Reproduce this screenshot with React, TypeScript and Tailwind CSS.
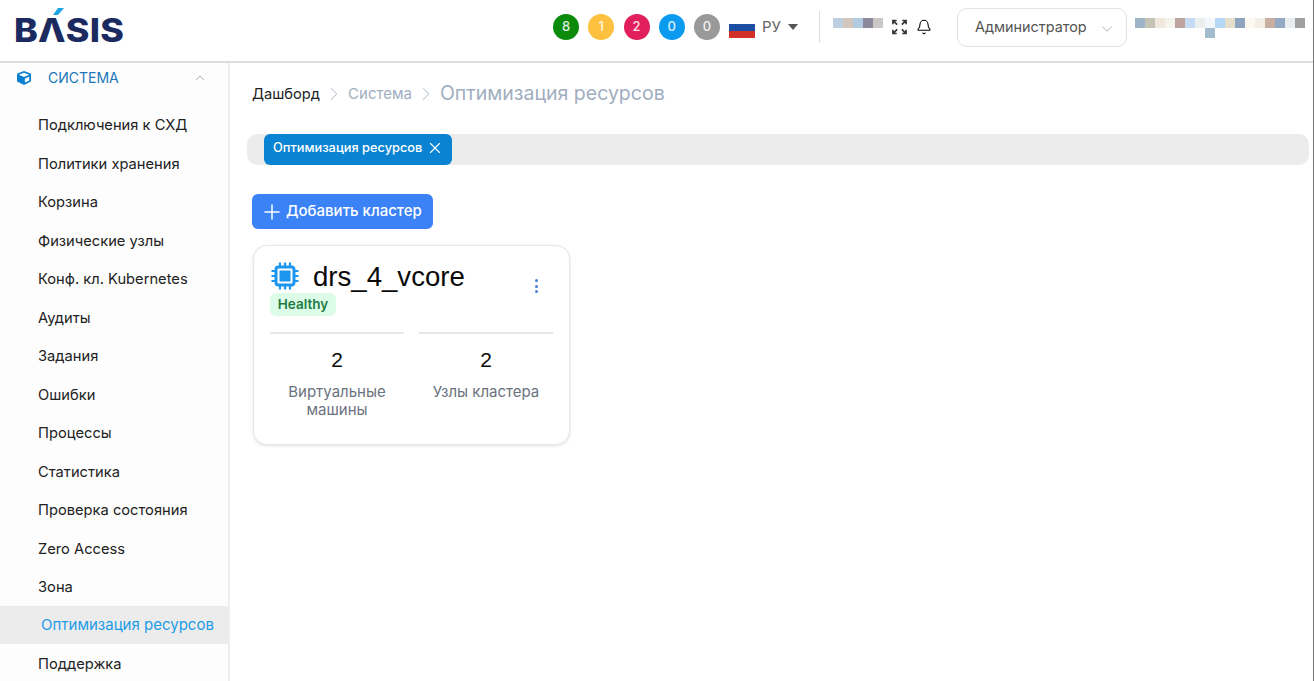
import React from "react";
import { Bell, ChevronDown, ChevronRight, ChevronUp, Plus, X } from "lucide-react";
import { FaCube } from "react-icons/fa";

const STATUS = [
  { value: 8, bg: "bg-[#0b8a0b]" },
  { value: 1, bg: "bg-[#fdc13f]" },
  { value: 2, bg: "bg-[#e01f5c]" },
  { value: 0, bg: "bg-[#0a9af0]" },
  { value: 0, bg: "bg-[#999999]" },
];

const MENU = [
  "Подключения к СХД",
  "Политики хранения",
  "Корзина",
  "Физические узлы",
  "Конф. кл. Kubernetes",
  "Аудиты",
  "Задания",
  "Ошибки",
  "Процессы",
  "Статистика",
  "Проверка состояния",
  "Zero Access",
  "Зона",
];

const MOSAIC_A = ["#bdd0e2", "#d3c6bc", "#b1cbe0", "#8c889c", "#ccc7c7"];
const MOSAIC_B = [
  "#9fb4c9", "#c5c3b4", "#f0e8dd", "#f5f3ee", "#bfa3a0", "#c5dcf4", "#e9efec", "#f3f7fb", "#b5d8f6",
  "#e6dfcb", "#8fa4bf", "#fbf9f0", "#f4efe6", "#c8ada0", "#94aac4", "#e9edf0", "#a0a0a0",
];

function Flag() {
  return (
    <div className="flex flex-col w-[26px] h-[21px]">
      <div className="flex-1 bg-white" />
      <div className="flex-1 bg-[#1a4fa3]" />
      <div className="flex-1 bg-[#d12f28]" />
    </div>
  );
}

function ChipIcon() {
  return (
    <svg width="30" height="30" viewBox="0 0 30 30" fill="none" stroke="#1a96ee" strokeWidth="3">
      <rect x="6" y="6" width="18" height="18" rx="2.5" />
      <rect x="9.5" y="9.5" width="11" height="11" fill="#1a96ee" stroke="none" />
      <path d="M10 1.5V6M15 1.5V6M20 1.5V6M10 24v4.5M15 24v4.5M20 24v4.5M1.5 10H6M1.5 15H6M1.5 20H6M24 10h4.5M24 15h4.5M24 20h4.5" strokeWidth="2.2" />
    </svg>
  );
}

function Header() {
  return (
    <header className="h-[63px] shrink-0 flex items-start bg-white border-b-2 border-[#dddddd]">
      {/* Logo */}
      <div className="relative ml-[14px] mt-[8px] w-[112px] h-[36px]">
        <span className="absolute left-0 top-[4px] origin-left scale-x-[1.12] text-[#1b2b5f] text-[32px] leading-[38px] font-extrabold tracking-[0.2px] whitespace-nowrap">
          BΛSIS
        </span>
        <svg className="absolute left-[39px] top-0" width="11" height="7" viewBox="0 0 11 7">
          <polygon points="5,0 11,0 5,7 0,7" fill="#1ba4e4" />
        </svg>
      </div>

      <div className="ml-auto h-[54px] flex items-center">
        <div className="flex items-center gap-[9.25px]">
          {STATUS.map((s, i) => (
            <span
              key={i}
              className={`w-[26px] h-[26px] rounded-full flex items-center justify-center text-[13px] font-medium text-white/85 ${s.bg}`}
            >
              {s.value}
            </span>
          ))}
        </div>
        <div className="ml-[9px] flex items-center">
          <Flag />
          <span className="ml-[7px] w-[19px] text-[15px] text-[#666666]">РУ</span>
          <span className="ml-[7px] w-0 h-0 border-x-[5px] border-x-transparent border-t-[6px] border-t-[#555555]" />
        </div>
        <div className="ml-[21px] w-px h-[32px] bg-[#dddddd]" />
        <div className="ml-[13px] flex h-[10px] mt-[-8px]">
          {MOSAIC_A.map((c, i) => (
            <div key={i} className="w-[10px] h-[10px]" style={{ background: c }} />
          ))}
        </div>
        <svg className="ml-[9px]" width="15" height="16" viewBox="0 0 16 16" fill="none" stroke="#333333" strokeWidth="1.7">
          <path d="M1 5V1h4M1 1l4.5 4.5M11 1h4v4M15 1l-4.5 4.5M1 11v4h4M1 15l4.5-4.5M15 11v4h-4M15 15l-4.5-4.5" />
        </svg>
        <Bell className="ml-[9px]" size={16} strokeWidth={1.6} color="#000000" />
        <button className="ml-[25px] w-[170px] h-[39px] flex items-center pl-[17px] pr-[10px] rounded-[10px] border border-[#e2e2e2] text-[14.4px] text-[#555555]">
          <span>Администратор</span>
          <ChevronDown className="ml-auto mt-[3px]" size={18} strokeWidth={1} color="#999999" />
        </button>
        <div className="ml-[8px] mr-[8px] relative flex w-[170px] h-[10px] mt-[-8px]">
          {MOSAIC_B.map((c, i) => (
            <div key={i} className="w-[10px] h-[10px]" style={{ background: c }} />
          ))}
          <div className="absolute left-[70px] top-[10px] w-[10px] h-[10px] bg-[#a3bccd]" />
        </div>
      </div>
    </header>
  );
}

function Sidebar() {
  return (
    <aside className="w-[230px] shrink-0 h-full bg-[#fdfdfd] border-r-2 border-[#eeeeee] overflow-hidden">
      <div className="h-[29px] flex items-center pl-[17px] pr-[20px]">
        <FaCube size={14} color="#0a7fd0" />
        <span className="ml-[17px] text-[14px] text-[#1a76b8]">СИСТЕМА</span>
        <ChevronUp className="ml-auto" size={16} strokeWidth={1} color="#888888" />
      </div>
      <nav className="mt-[13px]">
        {MENU.map((item) => (
          <div key={item} className="h-[38.5px] pt-[2px] flex items-center pl-[38px] text-[14.7px] text-[#222222] whitespace-nowrap">
            {item}
          </div>
        ))}
        <div className="h-[38.5px] pt-[1px] flex items-center pl-[41px] text-[15px] text-[#1f9be6] bg-[#ececec] whitespace-nowrap">
          Оптимизация ресурсов
        </div>
        <div className="h-[38.5px] pt-[2px] flex items-center pl-[38px] text-[14.7px] text-[#222222]">Поддержка</div>
      </nav>
    </aside>
  );
}

function Stat({ value, label }: { value: number; label: string }) {
  return (
    <div className="border-t-2 border-[#e5e7eb] text-center px-[10px]">
      <div className="mt-[13px] text-[21px] leading-[26px] text-[#0a0a0a] font-['Liberation_Sans',sans-serif]">{value}</div>
      <div className="mt-[10px] text-[15px] leading-[18px] text-[#6b7280]">{label}</div>
    </div>
  );
}

function ClusterCard() {
  return (
    <div className="w-[317px] h-[200px] ml-[6px] mt-[16px] rounded-[14px] border border-[#e4e8ee] bg-white shadow-[0_1px_3px_rgba(0,0,0,0.12)] px-[16px] pt-[14px]">
      <div className="flex items-start">
        <div className="flex-1">
          <div className="flex items-center h-[32px]">
            <ChipIcon />
            <span className="ml-[13px] mt-[1px] text-[27.6px] leading-[32px] text-[#0a0a0a] font-['Liberation_Sans',sans-serif]">drs_4_vcore</span>
          </div>
          <span className="mt-[1px] block w-[66px] h-[23px] leading-[23px] text-center rounded-[6px] bg-[#dcfce7] text-[#1d7a42] text-[13.5px] font-semibold">
            Healthy
          </span>
        </div>
        <div className="mt-[19px] mr-[15px] flex flex-col gap-[2.5px]">
          <span className="w-[3px] h-[3px] rounded-full bg-[#4a7fd6]" />
          <span className="w-[3px] h-[3px] rounded-full bg-[#4a7fd6]" />
          <span className="w-[3px] h-[3px] rounded-full bg-[#4a7fd6]" />
        </div>
      </div>
      <div className="mt-[16px] grid grid-cols-2 gap-[15px]">
        <Stat value={2} label="Виртуальные машины" />
        <Stat value={2} label="Узлы кластера" />
      </div>
    </div>
  );
}

export default function App() {
  return (
    <div className="w-[1314px] h-[681px] flex flex-col overflow-hidden bg-white border-r border-[#777777] font-['Inter',sans-serif]">
      <Header />
      <div className="flex-1 flex min-h-0">
        <Sidebar />
        <main className="flex-1 min-w-0 pl-[17px] pr-[4px]">
          {/* Breadcrumbs */}
          <div className="mt-[17px] h-[28px] ml-[5px] flex items-center">
            <span className="text-[14.7px] text-[#222222]">Дашборд</span>
            <ChevronRight className="mx-[3px]" size={22} strokeWidth={1} color="#a0aec0" />
            <span className="text-[15px] text-[#a0aec0]">Система</span>
            <ChevronRight className="mx-[3px]" size={22} strokeWidth={1} color="#a0aec0" />
            <span className="text-[19.5px] text-[#a0aec0]">Оптимизация ресурсов</span>
          </div>
          {/* Tabs */}
          <div className="mt-[26px] h-[31px] rounded-[10px] bg-[#ececec] pl-[17px]">
            <div className="w-[188px] h-[31px] flex items-center pl-[9px] pb-[3px] gap-[4px] rounded-[6px] bg-[#0a84d2] text-white text-[12.8px] font-medium whitespace-nowrap">
              Оптимизация ресурсов
              <X size={18} strokeWidth={1.5} />
            </div>
          </div>
          <button className="mt-[29px] ml-[5px] w-[181px] h-[35px] flex items-center pl-[8px] gap-[2px] rounded-[6px] bg-[#3b82f6] text-white text-[15px] font-medium">
            <Plus size={24} strokeWidth={1.5} />
            Добавить кластер
          </button>
          <ClusterCard />
        </main>
      </div>
    </div>
  );
}
